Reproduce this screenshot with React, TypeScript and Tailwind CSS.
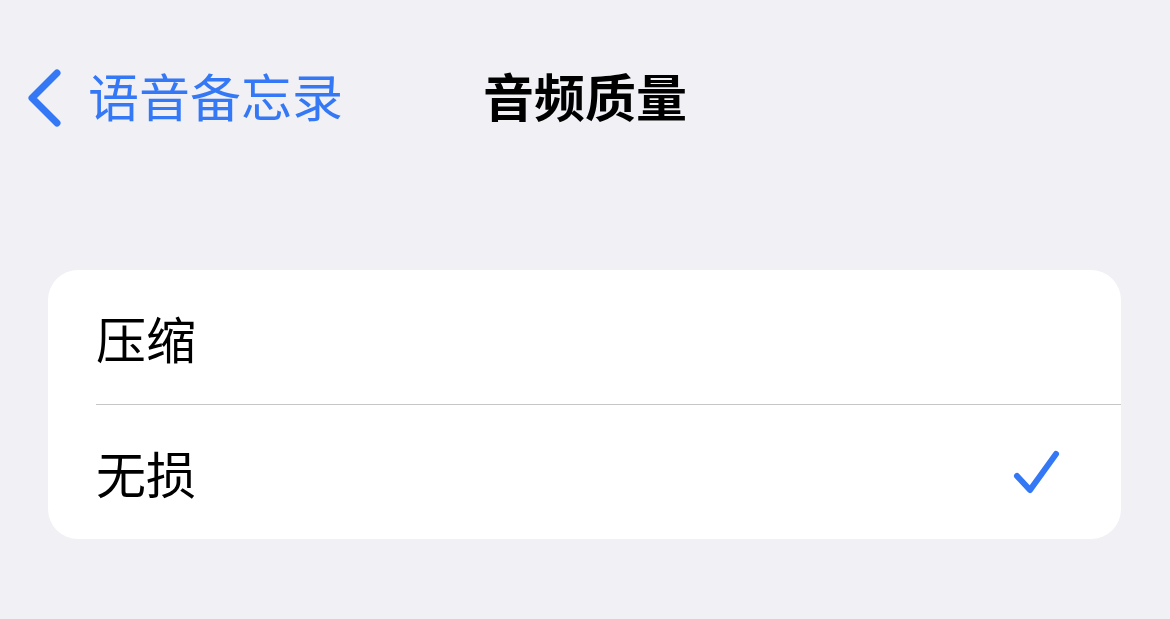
const font = { fontFamily: '"Noto Sans CJK SC", "Noto Sans", sans-serif' };

function BackChevron() {
  return (
    <svg width="36" height="58" viewBox="0 0 36 58" fill="none">
      <path
        d="M31 4 L6 29 L31 54"
        stroke="#3478F6"
        strokeWidth="7"
        strokeLinecap="round"
        strokeLinejoin="round"
      />
    </svg>
  );
}

function Check() {
  return (
    <svg width="48" height="48" viewBox="0 0 48 48" fill="none">
      <path
        d="M4 28 L17 42 L43 6"
        stroke="#3478F6"
        strokeWidth="6"
        strokeLinecap="round"
        strokeLinejoin="round"
      />
    </svg>
  );
}

const options = [
  { label: "压缩", selected: false },
  { label: "无损", selected: true },
];

export default function App() {
  return (
    <div
      className="w-[1170px] h-[619px] bg-[#f0f0f5] overflow-hidden"
      style={font}
    >
      {/* navigation bar */}
      <div className="grid grid-cols-[1fr_auto_1fr] items-center h-[196px]">
        <div className="flex items-center pl-[26px] gap-[26px] text-[#3478F6] text-[51px] leading-none">
          <BackChevron />
          <span className="-translate-y-[3px]">语音备忘录</span>
        </div>
        <div className="text-[51px] font-bold text-black leading-none -translate-y-[3px]">
          音频质量
        </div>
        <div />
      </div>

      {/* options list */}
      <div className="mt-[74px] mx-[48px] w-[1073px] bg-white rounded-[30px] overflow-hidden">
        {options.map((opt, i) => (
          <div key={opt.label}>
            {i > 0 && <div className="ml-[48px] h-px bg-[#c6c6c8]" />}
            <div className="flex items-center justify-between h-[134px] pl-[48px] pr-[60px]">
              <span className="text-[50px] text-black leading-none">
                {opt.label}
              </span>
              {opt.selected && <Check />}
            </div>
          </div>
        ))}
      </div>
    </div>
  );
}
